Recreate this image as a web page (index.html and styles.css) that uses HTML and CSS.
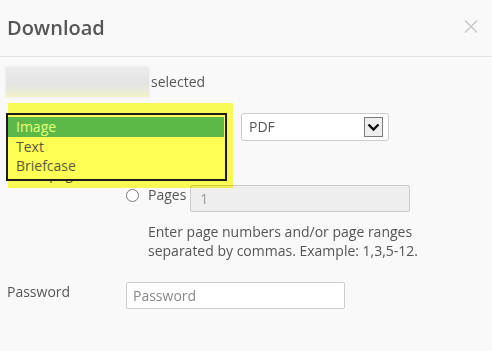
FILE: index.html
```html
<!DOCTYPE html>
<html>
<head>
<meta charset="utf-8">
<link rel="stylesheet" href="styles.css">
</head>
<body>
<div class="header">
  <h1 class="title">Download</h1>
  <span class="close" aria-label="Close">
    <svg width="14" height="15" viewBox="0 0 14 15"><path d="M1 1.5 L13 13.5 M13 1.5 L1 13.5" stroke="#c9c9c9" stroke-width="1.6" fill="none"/></svg>
  </span>
</div>
<div class="content">
  <div class="row selection-row">
    <span class="blurred"></span>
    <span class="selected-text">selected</span>
  </div>
  <div class="row format-row">
    <span class="label">Format</span>
    <div class="select">
      <span class="select-value">PDF</span>
      <span class="select-arrow">
        <svg width="13" height="9" viewBox="0 0 13 9"><path d="M1.5 1.5 L6.5 6.5 L11.5 1.5" stroke="#111" stroke-width="2.4" fill="none"/></svg>
      </span>
    </div>
  </div>
  <div class="row pages-row">
    <span class="label">Select pages</span>
    <div class="radios">
      <div class="radio-line">
        <span class="radio"></span><span class="radio-text">All</span>
      </div>
      <div class="radio-line pages-line">
        <span class="radio"></span><span class="radio-text">Pages</span>
        <span class="input disabled">1</span>
      </div>
      <p class="help">Enter page numbers and/or page ranges<br>separated by commas. Example: 1,3,5-12.</p>
    </div>
  </div>
  <div class="row password-row">
    <span class="label">Password</span>
    <span class="input password">Password</span>
  </div>
</div>
<div class="highlight"></div>
<div class="listbox">
  <div class="option active">Image</div>
  <div class="option">Text</div>
  <div class="option">Briefcase</div>
</div>
</body>
</html>
```
FILE: styles.css
```css
html, body {
  margin: 0;
  padding: 0;
  background: #f9f9f9;
}
body {
  font-family: "Open Sans", "DejaVu Sans", sans-serif;
  font-size: 14px;
  color: #555;
  width: 492px;
  height: 351px;
  overflow: hidden;
}
.header {
  height: 56px;
  border-bottom: 1px solid #e5e5e5;
  display: flex;
  align-items: center;
  justify-content: space-between;
  padding: 0 14px 0 7px;
}
.title {
  margin: 0;
  font-size: 20px;
  font-weight: 600;
  color: #555;
  line-height: 24px;
}
.close {
  display: flex;
  margin-top: -4px;
}
.content {
  padding: 10px 7px 0 7px;
}
.row {
  display: flex;
}
.label {
  width: 119px;
  flex: none;
  line-height: 20px;
}
.selection-row {
  height: 30px;
  align-items: center;
  margin-left: -1px;
}
.blurred {
  width: 143px;
  height: 30px;
  background: linear-gradient(#ededed 0%, #e4e4e4 55%, #ebebd8 82%, #f3f3c4 100%);
  box-shadow: 0 0 2px 1px #efefef;
}
.selected-text {
  margin-left: 2px;
  line-height: 20px;
}
.format-row {
  margin-top: 16px;
  height: 28px;
}
.select {
  box-sizing: border-box;
  margin-left: 115px;
  width: 148px;
  height: 28px;
  background: #fff;
  border: 1px solid #ccc;
  border-radius: 3px;
  display: flex;
  align-items: center;
  justify-content: space-between;
  padding: 0 5px 0 7px;
}
.select-value {
  line-height: 20px;
}
.select-arrow {
  width: 17px;
  height: 18px;
  border: 1px solid #7a7a7a;
  background: #efefef;
  display: flex;
  align-items: center;
  justify-content: center;
}
.pages-row {
  margin-top: 23px;
}
.radios {
  display: flex;
  flex-direction: column;
}
.radio-line {
  display: flex;
  align-items: flex-start;
  height: 20px;
}
.radio {
  width: 11px;
  height: 11px;
  border: 1px solid #7b7b7b;
  border-radius: 50%;
  background: #fff;
  margin-top: 4px;
  flex: none;
}
.radio-text {
  margin-left: 9px;
  line-height: 20px;
}
.pages-line {
  margin-top: 1px;
  height: 27px;
}
.input {
  box-sizing: border-box;
  border: 1px solid #ccc;
  border-radius: 2px;
  background: #fff;
  height: 27px;
  line-height: 25px;
  padding-left: 6px;
  color: #999;
}
.input.disabled {
  margin-left: 4px;
  width: 220px;
  background: #eee;
  padding-left: 9px;
}
.help {
  margin: 11px 0 0 22px;
  line-height: 18.5px;
}
.password-row {
  margin-top: 22px;
}
.input.password {
  width: 219px;
  height: 27px;
  color: #888;
}
.highlight {
  position: absolute;
  left: 8px;
  top: 103px;
  width: 225px;
  height: 85px;
  background: #ffff55;
  mix-blend-mode: multiply;
}
.listbox {
  position: absolute;
  left: 6px;
  top: 113px;
  width: 217px;
  height: 62px;
  border: 2px solid #1c1c1c;
  background: #ffff55;
  padding-top: 2px;
}
.option {
  height: 19.5px;
  line-height: 19.5px;
  padding-left: 8px;
  color: #5a5a3a;
  margin-right: 1px;
}
.option.active {
  background: #5cb947;
  color: #eaff70;
}
```
